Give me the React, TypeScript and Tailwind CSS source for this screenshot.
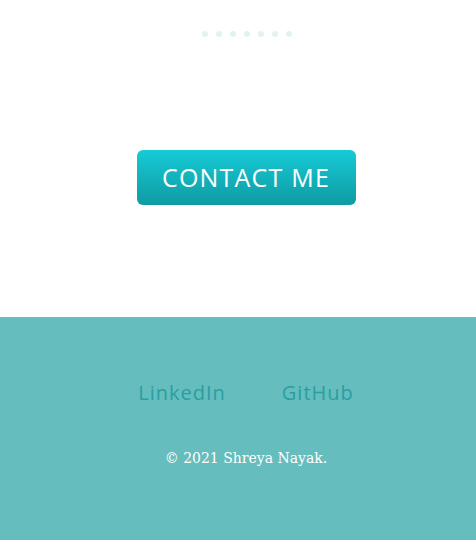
import React from "react";

export default function App() {
  const dots = [0, 1, 2, 3, 4, 5, 6];
  return (
    <div className="w-[476px] h-[540px] flex flex-col bg-white">
      <div className="h-[317px] flex flex-col items-center">
        <div className="flex gap-[8px] mt-[31px] ml-[17px]">
          {dots.map((d) => (
            <div key={d} className="w-[6px] h-[6px] rounded-full bg-[#e3f1ef]" />
          ))}
        </div>
        <button className="mt-[113px] ml-[16px] w-[219px] h-[55px] rounded-[6px] bg-gradient-to-b from-[#16cbd6] to-[#0f9ba3] text-white text-[25px] font-['Open_Sans',sans-serif] tracking-[1.2px] flex items-center justify-center">
          CONTACT ME
        </button>
      </div>
      <div className="flex-1 bg-[#65bdbd] flex flex-col items-center">
        <div className="flex gap-[56px] mt-[61px] ml-[16px] text-[#2b9ea2] text-[20px] font-['Open_Sans',sans-serif] tracking-[1px]">
          <span>LinkedIn</span>
          <span>GitHub</span>
        </div>
        <div className="mt-[40px] ml-[16px] text-white text-[14px] font-['DejaVu_Serif',serif]">
          © 2021 Shreya Nayak.
        </div>
      </div>
    </div>
  );
}
